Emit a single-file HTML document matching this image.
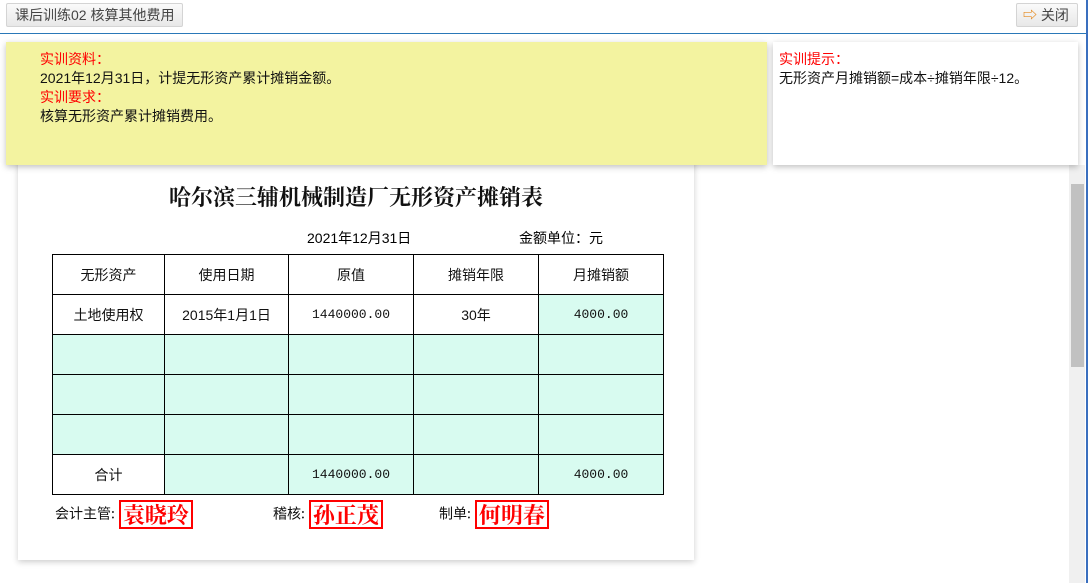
<!DOCTYPE html>
<html><head><meta charset="utf-8"><style>
*{margin:0;padding:0;box-sizing:border-box}
body{width:1090px;height:583px;overflow:hidden;background:#fff;font-family:"Liberation Sans","Noto Sans CJK SC",sans-serif;position:relative;font-size:13px}
.btn{position:absolute;top:3px;height:24px;border:1px solid #d4d4d4;border-radius:2px;background:linear-gradient(#fafafa,#e8e8e8);color:#444;font-size:14px;line-height:22px;padding:0 8px}
.topline{position:absolute;left:0;top:33px;width:1087px;height:1px;background:#2a78b8}
.rline{position:absolute;left:1086px;top:0;width:2px;height:583px;background:#3a6fbf}
.yellow{position:absolute;left:6px;top:42px;width:761px;height:123px;background:#f3f3a0;box-shadow:0 2px 6px rgba(0,0,0,.25);padding:8px 0 0 34px;font-size:14px;line-height:19px;color:#111}
.tip{position:absolute;left:773px;top:42px;width:305px;height:123px;background:#fff;box-shadow:0 2px 6px rgba(0,0,0,.25);padding:8px 0 0 6px;font-size:14px;line-height:19px;color:#111}
.red{color:#f00}
.paper{position:absolute;left:18px;top:150px;width:676px;height:410px;background:#fff;box-shadow:0 2px 6px rgba(0,0,0,.2)}
.sb{position:absolute;left:1069px;top:165px;width:16px;height:418px;background:#f0f0f0}
.thumb{position:absolute;left:1071px;top:184px;width:13px;height:183px;background:#c1c1c1}
h1{position:absolute;left:0;width:676px;top:31px;text-align:center;font-family:"Liberation Serif","Noto Serif CJK SC",serif;font-size:22px;font-weight:bold;color:#111}
table{position:absolute;left:34px;top:104px;border-collapse:collapse;font-family:"Liberation Sans","Noto Sans CJK SC",sans-serif;font-size:14px}
td{border:1px solid #000;height:40px;text-align:center;color:#111}
.g{background:#d8fbf0}
.m{font-family:"Liberation Mono","Noto Sans CJK SC",monospace;font-size:13px}
.sig{position:absolute;top:350px;font-size:14px;font-family:"Noto Sans CJK SC",sans-serif;color:#111}
.st{display:inline-block;margin-left:4px;border:2px solid #f00;color:#f00;font-weight:bold;font-size:22px;line-height:25px;padding:0 2px;vertical-align:middle;font-family:"Noto Serif CJK SC",serif}
</style></head><body>
<div class="btn" style="left:6px">课后训练02 核算其他费用</div>
<div class="btn" style="left:1016px;width:62px;padding:0 6px"><span style="color:#e58a1f;font-weight:bold">⇨</span> 关闭</div>
<div class="topline"></div>
<div class="rline"></div>
<div class="sb"></div><div class="thumb"></div>
<div class="paper">
<h1>哈尔滨三辅机械制造厂无形资产摊销表</h1>
<div style="position:absolute;left:289px;top:78px;font-size:14px">2021年12月31日</div>
<div style="position:absolute;left:501px;top:78px;font-size:14px">金额单位：元</div>
<table>
<tr><td style="width:112px">无形资产</td><td style="width:124px">使用日期</td><td style="width:125px">原值</td><td style="width:125px">摊销年限</td><td style="width:125px">月摊销额</td></tr>
<tr><td>土地使用权</td><td>2015年1月1日</td><td class="m">1440000.00</td><td>30年</td><td class="g m">4000.00</td></tr>
<tr><td class="g"></td><td class="g"></td><td class="g"></td><td class="g"></td><td class="g"></td></tr>
<tr><td class="g"></td><td class="g"></td><td class="g"></td><td class="g"></td><td class="g"></td></tr>
<tr><td class="g"></td><td class="g"></td><td class="g"></td><td class="g"></td><td class="g"></td></tr>
<tr><td>合计</td><td class="g"></td><td class="g m">1440000.00</td><td class="g"></td><td class="g m">4000.00</td></tr>
</table>
<div class="sig" style="left:37px">会计主管:<span class="st">袁晓玲</span></div>
<div class="sig" style="left:255px">稽核:<span class="st">孙正茂</span></div>
<div class="sig" style="left:421px">制单:<span class="st">何明春</span></div>
</div>
<div class="yellow"><span class="red">实训资料：</span><br>2021年12月31日，计提无形资产累计摊销金额。<br><span class="red">实训要求：</span><br>核算无形资产累计摊销费用。</div>
<div class="tip"><span class="red">实训提示：</span><br>无形资产月摊销额=成本÷摊销年限÷12。</div>
</body></html>
